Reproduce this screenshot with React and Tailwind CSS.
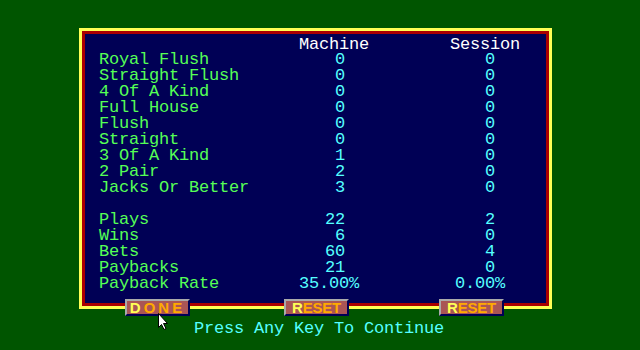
import React from 'react';

const MONO = { fontFamily: '"Liberation Mono", "DejaVu Sans Mono", monospace' };

const HANDS = [
  ['Royal Flush', '0', '0'],
  ['Straight Flush', '0', '0'],
  ['4 Of A Kind', '0', '0'],
  ['Full House', '0', '0'],
  ['Flush', '0', '0'],
  ['Straight', '0', '0'],
  ['3 Of A Kind', '1', '0'],
  ['2 Pair', '2', '0'],
  ['Jacks Or Better', '3', '0'],
];

const TOTALS = [
  ['Plays', '22', '2'],
  ['Wins', '6', '0'],
  ['Bets', '60', '4'],
  ['Paybacks', '21', '0'],
];

function StatRow({ label, machine, session, pct }) {
  // integers sit one column left of the "%" sign
  const pad = pct ? '' : ' ';
  return (
    <div className="flex h-[16px] whitespace-pre">
      <div className="w-[200px] text-[#55ff55]">{label}</div>
      <div className="w-[56px] text-right text-[#55ffff]">{machine + pad}</div>
      <div className="w-[150px] text-right text-[#55ffff]">{session + pad}</div>
    </div>
  );
}

function GameButton({ text, spaced }) {
  return (
    <div
      className="flex h-[17px] w-[65px] items-center justify-center border-t-2 border-l-2 border-r-2 border-b-2 border-t-[#aaaaaa] border-l-[#aaaaaa] border-r-[#000055] border-b-[#000055] bg-[#aa5555] text-[15px] font-bold leading-none"
      style={{ fontFamily: '"Liberation Sans", Arial, sans-serif' }}
    >
      <span className={spaced ? 'tracking-[3px]' : ''}>
        <span className="text-[#ffff55]">{text[0]}</span>
        <span className="text-[#ffaa00]">{text.slice(1)}</span>
      </span>
    </div>
  );
}

function Cursor() {
  return (
    <svg
      className="absolute left-[158px] top-[313px]"
      width="11"
      height="17"
      viewBox="0 0 11 17"
    >
      <path
        d="M0.5 0.5 L0.5 14.5 L3.5 11.5 L6 16.5 L8 15.5 L5.5 10.5 L9.5 10.5 Z"
        fill="#ffffff"
        stroke="#000000"
        strokeWidth="1"
      />
    </svg>
  );
}

export default function App() {
  return (
    <div
      className="relative h-[350px] w-[640px] overflow-hidden bg-[#005500] pt-[28px] text-[17px] leading-[16px] tracking-[-0.2px]"
      style={MONO}
    >
      <div className="ml-[79px] h-[281px] w-[473px] border-[3px] border-[#ffff55]">
        <div className="h-full w-full border-[3px] border-[#aa0000] bg-[#000055] pl-[14px] pt-[3px]">
          <div className="flex h-[15px] whitespace-pre text-white">
            <div className="w-[200px]" />
            <div className="w-[151px]">Machine</div>
            <div>Session</div>
          </div>
          {HANDS.map(([label, m, s]) => (
            <StatRow key={label} label={label} machine={m} session={s} />
          ))}
          <div className="h-[16px]" />
          {TOTALS.map(([label, m, s]) => (
            <StatRow key={label} label={label} machine={m} session={s} />
          ))}
          <StatRow label="Payback Rate" machine="35.00%" session="0.00%" pct />
        </div>
      </div>

      <div className="-mt-[10px] ml-[125px] flex">
        <GameButton text="DONE" spaced />
        <div className="ml-[94px]">
          <GameButton text="RESET" />
        </div>
        <div className="ml-[90px]">
          <GameButton text="RESET" />
        </div>
      </div>

      <div className="ml-[194px] mt-[5px] h-[16px] whitespace-pre text-[#55ffff]">
        Press Any Key To Continue
      </div>

      <Cursor />
    </div>
  );
}
